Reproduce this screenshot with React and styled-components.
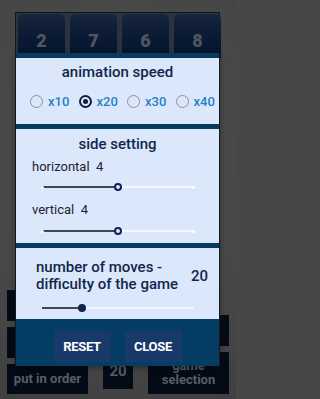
import React from "react";
import styled, { createGlobalStyle } from "styled-components";

const GlobalStyle = createGlobalStyle`
  html, body {
    margin: 0;
    padding: 0;
    background: #474747;
  }
  body {
    font-family: Roboto, "Noto Sans", sans-serif;
  }
`;

const Screen = styled.div`
  position: relative;
  width: 236px;
  height: 399px;
  overflow: hidden;
  background: radial-gradient(circle at 50% 40%, #4d4d4d 0%, #464646 70%, #404040 100%);
  display: flex;
  flex-direction: column;
`;

const Board = styled.div`
  margin: 12px 0 0 15px;
  width: 205px;
  padding: 1px 2px 0 2px;
  box-sizing: border-box;
  background: #2c333d;
  border: 1px solid #0c1828;
  border-bottom: none;
  display: grid;
  grid-template-columns: repeat(4, 47px);
  column-gap: 5px;
`;

const Tile = styled.div`
  height: 44px;
  border-radius: 5px 5px 0 0;
  background: linear-gradient(180deg, #17263d 0%, #0b1a33 55%, #041230 100%);
  color: #50555f;
  font-weight: 900;
  font-size: 18px;
  line-height: 20px;
  display: flex;
  justify-content: center;
  padding-top: 17px;
  box-sizing: border-box;
`;

const Spacer = styled.div`
  flex: 1;
`;

const Controls = styled.div`
  display: flex;
  align-items: flex-end;
  padding: 0 7px 5px 7px;
  gap: 15px;
`;

const Column = styled.div`
  display: flex;
  flex-direction: column;
  gap: 6px;
  width: 81px;
`;

const GameButton = styled.div`
  height: ${(p) => p.$h}px;
  background: #050a17;
  color: #585d68;
  font-weight: 700;
  font-size: 13px;
  line-height: 14px;
  display: flex;
  align-items: center;
  justify-content: center;
  text-align: center;
`;

const Counter = styled(GameButton)`
  width: 30px;
  font-size: 15px;
  margin-bottom: 5px;
  padding-top: 4px;
  box-sizing: border-box;
`;

const Modal = styled.div`
  position: absolute;
  left: 15px;
  top: 53px;
  width: 205px;
  box-sizing: border-box;
  border-left: 1px solid #111926;
  border-right: 1px solid #111926;
  background: #083a5f;
  padding-top: 5px;
  display: flex;
  flex-direction: column;
  gap: 5px;
  box-shadow: 0 2px 6px rgba(0, 0, 0, 0.35);
`;

const Section = styled.div`
  background: #dbe8fc;
  height: ${(p) => p.$h}px;
  box-sizing: border-box;
  padding-top: ${(p) => p.$top}px;
  display: flex;
  flex-direction: column;
`;

const Title = styled.div`
  font-size: 15px;
  font-weight: 500;
  line-height: 20px;
  color: #13264a;
  text-align: center;
`;

const RadioRow = styled.div`
  display: grid;
  grid-template-columns: repeat(4, 48.5px);
  padding-left: 14px;
  margin-top: 11px;
  height: 16px;
  align-items: center;
`;

const RadioItem = styled.label`
  display: flex;
  align-items: center;
  gap: 5px;
  font-size: 13px;
  font-weight: 500;
  color: #2780c2;
`;

const RadioCircle = styled.span`
  width: 13px;
  height: 13px;
  box-sizing: border-box;
  border-radius: 50%;
  border: ${(p) => (p.$on ? "2px solid #0d1f3f" : "1.5px solid #8d9096")};
  display: flex;
  align-items: center;
  justify-content: center;
  &::after {
    content: "";
    width: 5px;
    height: 5px;
    border-radius: 50%;
    background: ${(p) => (p.$on ? "#0d1f3f" : "transparent")};
  }
`;

const Label = styled.div`
  font-size: 13px;
  line-height: 16px;
  color: #1c2230;
  padding-left: 16px;
  margin-top: ${(p) => p.$mt}px;
  white-space: pre;
`;

const SliderBox = styled.div`
  position: relative;
  width: 152px;
  height: 16px;
  margin-left: 26px;
  margin-top: ${(p) => p.$mt}px;
`;

const TrackRest = styled.div`
  position: absolute;
  left: 0;
  right: 0;
  top: 7px;
  height: 2px;
  background: #f3f7ff;
  border-radius: 1px;
`;

const TrackFill = styled.div`
  position: absolute;
  left: 0;
  top: 7.25px;
  height: 1.5px;
  background: #3e4656;
`;

const Tick = styled.div`
  position: absolute;
  top: 6.5px;
  width: 3px;
  height: 3px;
  border-radius: 50%;
  background: #ffffff;
  ${(p) => (p.$end ? "right: -1px;" : "left: -1px;")}
`;

const Thumb = styled.div`
  position: absolute;
  top: 4px;
  width: 8px;
  height: 8px;
  margin-left: -4px;
  box-sizing: border-box;
  border-radius: 50%;
  border: 2px solid #0f2450;
  background: ${(p) => (p.$solid ? "#0f2450" : "#dbe8fc")};
`;

const MovesRow = styled.div`
  display: flex;
  align-items: center;
  justify-content: space-between;
  padding: 0 11px 0 20px;
  font-size: 15px;
  font-weight: 500;
  line-height: 17px;
  color: #13264a;
`;

const Footer = styled.div`
  background: #053c64;
  margin-top: -5px;
  height: 47px;
  box-sizing: border-box;
  padding: 12px 0 4px;
  display: flex;
  justify-content: center;
  gap: 14px;
`;

const DialogButton = styled.button`
  width: 57px;
  height: 31px;
  border: none;
  border-radius: 0;
  background: #1a396b;
  color: #ffffff;
  font-family: Roboto, "Noto Sans", sans-serif;
  font-size: 13px;
  font-weight: 700;
  letter-spacing: -0.3px;
  padding: 0;
`;

function Slider({ value, mt, ticks, solid }) {
  return (
    <SliderBox $mt={mt}>
      <TrackRest />
      <TrackFill style={{ width: `${value * 100}%` }} />
      {ticks && <Tick />}
      {ticks && <Tick $end />}
      <Thumb $solid={solid} style={{ left: `${value * 100}%` }} />
    </SliderBox>
  );
}

const topRow = [2, 7, 6, 8];
const speeds = ["x10", "x20", "x30", "x40"];

export default function App() {
  return (
    <>
      <GlobalStyle />
      <Screen>
        <Board>
          {topRow.map((n) => (
            <Tile key={n}>{n}</Tile>
          ))}
        </Board>
        <Spacer />
        <Controls>
          <Column>
            <GameButton $h={31} />
            <GameButton $h={31} />
            <GameButton $h={30}>put in order</GameButton>
          </Column>
          <Counter $h={40}>20</Counter>
          <Column>
            <GameButton $h={31} />
            <GameButton $h={42}>
              game
              <br />
              selection
            </GameButton>
          </Column>
        </Controls>

        <Modal>
          <Section $h={66} $top={4}>
            <Title>animation speed</Title>
            <RadioRow>
              {speeds.map((s) => (
                <RadioItem key={s}>
                  <RadioCircle $on={s === "x20"} />
                  {s}
                </RadioItem>
              ))}
            </RadioRow>
          </Section>
          <Section $h={114} $top={5}>
            <Title>side setting</Title>
            <Label $mt={5}>{"horizontal  4"}</Label>
            <Slider value={0.5} mt={4} ticks />
            <Label $mt={7}>{"vertical  4"}</Label>
            <Slider value={0.5} mt={5} ticks />
          </Section>
          <Section $h={71} $top={11}>
            <MovesRow>
              <span>
                number of moves -
                <br />
                difficulty of the game
              </span>
              <span>20</span>
            </MovesRow>
            <Slider value={0.26} mt={7} solid />
          </Section>
          <Footer>
            <DialogButton>RESET</DialogButton>
            <DialogButton>CLOSE</DialogButton>
          </Footer>
        </Modal>
      </Screen>
    </>
  );
}
